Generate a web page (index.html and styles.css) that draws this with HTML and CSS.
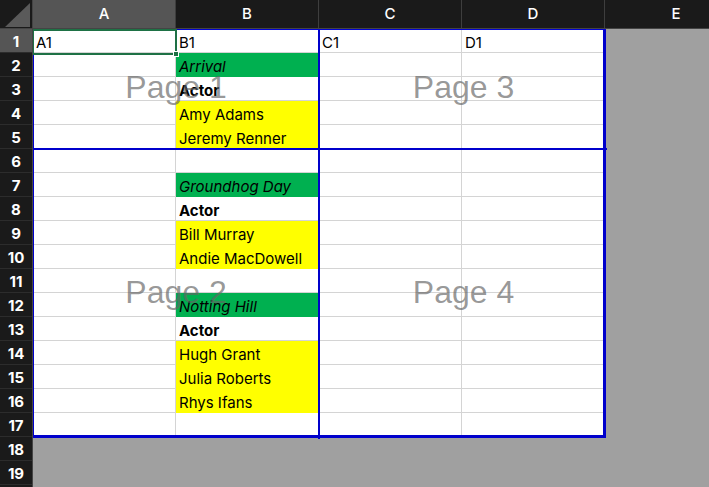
FILE: index.html
```html
<!DOCTYPE html>
<html lang="en">
<head>
<meta charset="utf-8">
<title>Page Break Preview</title>
<link rel="stylesheet" href="styles.css">
</head>
<body>
<div class="app">
  <div class="corner">
    <svg width="33" height="29" viewBox="0 0 33 29"><polygon points="5,27 30,27 30,3" fill="#5a5a5a"/></svg>
  </div>
  <div class="colheads">
    <div class="ch sel-h">A</div>
    <div class="ch">B</div>
    <div class="ch">C</div>
    <div class="ch">D</div>
    <div class="ch">E</div>
  </div>
  <div class="rowheads">
    <div class="rh sel-h">1</div><div class="rh">2</div><div class="rh">3</div><div class="rh">4</div><div class="rh">5</div>
    <div class="rh">6</div><div class="rh">7</div><div class="rh">8</div><div class="rh">9</div><div class="rh">10</div>
    <div class="rh">11</div><div class="rh">12</div><div class="rh">13</div><div class="rh">14</div><div class="rh">15</div>
    <div class="rh">16</div><div class="rh">17</div><div class="rh">18</div><div class="rh">19</div>
  </div>
  <div class="sheet">
    <div class="print">
      <div class="cells">
        <div class="c">A1</div><div class="c">B1</div><div class="c">C1</div><div class="c">D1</div>
        <div class="c"></div><div class="c green">Arrival</div><div class="c"></div><div class="c"></div>
        <div class="c"></div><div class="c bold">Actor</div><div class="c"></div><div class="c"></div>
        <div class="c"></div><div class="c yellow">Amy Adams</div><div class="c"></div><div class="c"></div>
        <div class="c"></div><div class="c yellow">Jeremy Renner</div><div class="c"></div><div class="c"></div>
        <div class="c"></div><div class="c"></div><div class="c"></div><div class="c"></div>
        <div class="c"></div><div class="c green">Groundhog Day</div><div class="c"></div><div class="c"></div>
        <div class="c"></div><div class="c bold">Actor</div><div class="c"></div><div class="c"></div>
        <div class="c"></div><div class="c yellow">Bill Murray</div><div class="c"></div><div class="c"></div>
        <div class="c"></div><div class="c yellow">Andie MacDowell</div><div class="c"></div><div class="c"></div>
        <div class="c"></div><div class="c"></div><div class="c"></div><div class="c"></div>
        <div class="c"></div><div class="c green">Notting Hill</div><div class="c"></div><div class="c"></div>
        <div class="c"></div><div class="c bold">Actor</div><div class="c"></div><div class="c"></div>
        <div class="c"></div><div class="c yellow">Hugh Grant</div><div class="c"></div><div class="c"></div>
        <div class="c"></div><div class="c yellow">Julia Roberts</div><div class="c"></div><div class="c"></div>
        <div class="c"></div><div class="c yellow">Rhys Ifans</div><div class="c"></div><div class="c"></div>
        <div class="c"></div><div class="c"></div><div class="c"></div><div class="c"></div>
      </div>
      <div class="pages">
        <div class="page p1"><span>Page 1</span></div>
        <div class="page p3"><span>Page 3</span></div>
        <div class="page p2"><span>Page 2</span></div>
        <div class="page p4"><span>Page 4</span></div>
      </div>
      <div class="selection"><div class="handle"></div></div>
    </div>
  </div>
</div>
</body>
</html>
```
FILE: styles.css
```css
* { box-sizing: border-box; }
html, body { margin: 0; padding: 0; }
body {
  width: 709px;
  height: 487px;
  overflow: hidden;
  background: #a0a0a0;
  font-family: Inter, "Noto Sans", sans-serif;
}
.app {
  display: grid;
  grid-template-columns: 33px 1fr;
  grid-template-rows: 29px 1fr;
  width: 709px;
  height: 487px;
}
.corner {
  background: #1a1a1a;
  border-right: 1px solid #444;
  border-bottom: 1px solid #444;
}
.corner svg { display: block; }
.colheads {
  display: flex;
  background: #1a1a1a;
  border-bottom: 1px solid #444;
  overflow: hidden;
}
.ch {
  flex: 0 0 143px;
  border-right: 1px solid #3e3e3e;
  color: #fff;
  font-size: 15px;
  font-weight: 500;
  text-align: center;
  line-height: 27px;
}
.ch.sel-h { background: #555; }
.rowheads {
  display: flex;
  flex-direction: column;
  background: #1a1a1a;
  border-right: 1px solid #444;
}
.rh {
  flex: 0 0 24px;
  border-bottom: 1px solid #2c2c2c;
  color: #fff;
  font-size: 15px;
  font-weight: 700;
  text-align: center;
  line-height: 21px;
  padding-top: 2px;
}
.rh.sel-h { background: #555; }
.sheet {
  background: #a0a0a0;
  overflow: hidden;
}
.print {
  position: relative;
  width: 573px;
  height: 409px;
}
.cells {
  display: grid;
  grid-template-columns: repeat(4, 143px);
  grid-auto-rows: 24px;
  background: #fff;
  width: 572px;
}
.c {
  border-right: 1px solid #d4d4d4;
  border-bottom: 1px solid #d4d4d4;
  font-size: 15px;
  line-height: 21px;
  padding: 3px 0 0 3px;
  color: #000;
  white-space: nowrap;
}
.c.green {
  background: #00b050;
  border-color: #00b050;
  font-style: italic;
}
.c.yellow {
  background: #ffff00;
  border-color: #ffff00;
}
.c.bold { font-weight: 700; }
.pages {
  position: absolute;
  inset: 0;
  display: grid;
  grid-template-columns: 286px 287px;
  grid-template-rows: 120px 289px;
  border-top: 1px solid #0000cc;
  border-left: 1px solid #0000cc;
  border-right: 3px solid #0000cc;
  border-bottom: 3px solid #0000cc;
  pointer-events: none;
}
.page {
  display: flex;
  align-items: center;
  justify-content: center;
  padding-bottom: 5px;
}
.p1, .p2 { border-right: 2px solid #0000cc; }
.p1, .p3 { border-bottom: 2px solid #0000cc; }
.page span {
  font-family: "Liberation Sans", Arial, sans-serif;
  font-size: 32px;
  line-height: 32px;
  color: rgba(100, 100, 100, 0.66);
}
.selection {
  position: absolute;
  left: -1px;
  top: 0;
  width: 145px;
  height: 26px;
  border: 2px solid #1e7145;
}
.handle {
  position: absolute;
  right: -4px;
  bottom: -4px;
  width: 6px;
  height: 6px;
  background: #1e7145;
  border: 1px solid #fff;
}
```
